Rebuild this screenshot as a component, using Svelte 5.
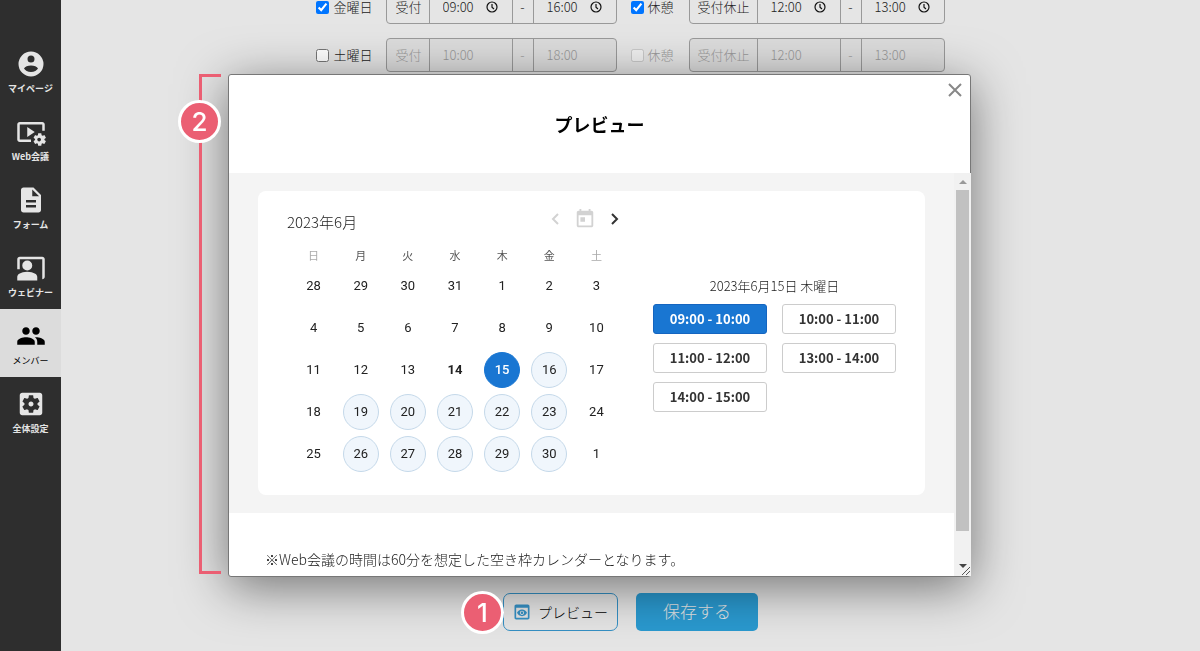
<script lang="ts">
  type Range = { label: string; from: string; to: string };
  type Row = { day: string; open: boolean; reception: Range; rest: Range };

  const menu = [
    {
      label: "マイページ",
      path: "M12 2a10 10 0 1 0 0 20 10 10 0 0 0 0-20zM12 5.2a2.8 2.8 0 1 1 0 5.600 2.8 2.8 0 0 1 0-5.600zM6.4 15.6c.8-1.5 3-2.5 5.6-2.5s4.8 1 5.6 2.5c-.8 1.6-3 2.7-5.6 2.7s-4.8-1.1-5.6-2.7z",
    },
    {
      label: "Web会議",
      path: "M3 6h18v5h2V6c0-1.1-.9-2-2-2H3c-1.1 0-2 .9-2 2v12c0 1.1.9 2 2 2h9v-2H3V6zM15 12L9 8v8zM22.71 18.43c.03-.29.04-.58.01-.86l1.07-.85c.1-.08.12-.21.06-.32l-1.03-1.79c-.06-.11-.19-.15-.31-.11l-1.28.5c-.23-.17-.48-.31-.75-.42l-.2-1.36c-.02-.12-.12-.21-.25-.21h-2.07c-.12 0-.23.09-.25.21l-.2 1.36c-.26.11-.51.26-.74.42l-1.28-.5c-.12-.05-.25 0-.31.11l-1.03 1.79c-.06.11-.04.24.06.32l1.07.86c-.03.29-.04.58-.01.86l-1.07.85c-.1.08-.12.21-.06.32l1.03 1.79c.06.11.19.15.31.11l1.27-.5c.23.17.48.31.75.42l.2 1.36c.02.12.12.21.25.21h2.07c.12 0 .23-.09.25-.21l.2-1.36c.26-.11.51-.26.74-.42l1.28.5c.12.05.25 0 .31-.11l1.03-1.79c.06-.11.04-.24-.06-.32l-1.06-.86zM18.5 19.5c-.83 0-1.5-.67-1.5-1.5s.67-1.5 1.5-1.5 1.5.67 1.5 1.5-.67 1.5-1.5 1.5z",
    },
    {
      label: "フォーム",
      path: "M14 2H6c-1.1 0-2 .9-2 2v16c0 1.1.9 2 2 2h12c1.1 0 2-.9 2-2V8l-6-6zm2 16H8v-2h8v2zm0-4H8v-2h8v2zm-3-5V3.5L18.5 9H13z",
    },
    {
      label: "ウェビナー",
      path: "M21 3H3c-1.1 0-2 .9-2 2v8h2V5h18v16c1.1 0 2-.9 2-2V5c0-1.1-.9-2-2-2zM9 6a4 4 0 1 0 0 8 4 4 0 0 0 0-8zM15.39 16.56C13.71 15.7 11.53 15 9 15s-4.71.7-6.39 1.56C1.61 17.07 1 18.1 1 19.22V22h16v-2.78c0-1.12-.61-2.15-1.61-2.66z",
    },
    {
      label: "メンバー",
      active: true,
      path: "M16 11c1.66 0 2.99-1.34 2.99-3S17.66 5 16 5s-3 1.34-3 3 1.34 3 3 3zm-8 0c1.66 0 2.99-1.34 2.99-3S9.66 5 8 5 5 6.34 5 8s1.34 3 3 3zm0 2c-2.33 0-7 1.17-7 3.5V19h14v-2.5c0-2.33-4.67-3.5-7-3.5zm8 0c-.29 0-.62.02-.97.05 1.16.84 1.97 1.97 1.97 3.45V19h6v-2.5c0-2.33-4.67-3.5-7-3.5z",
    },
    {
      label: "全体設定",
      path: "M12 10c-1.1 0-2 .9-2 2s.9 2 2 2 2-.9 2-2-.9-2-2-2zm7-7H5c-1.11 0-2 .9-2 2v14c0 1.1.89 2 2 2h14c1.11 0 2-.9 2-2V5c0-1.1-.89-2-2-2zm-1.75 9c0 .23-.02.46-.05.68l1.48 1.16c.13.11.17.3.08.45l-1.4 2.42c-.09.15-.27.21-.43.15l-1.74-.7c-.36.28-.76.51-1.18.69l-.26 1.85c-.03.17-.18.3-.35.3h-2.8c-.17 0-.32-.13-.35-.29l-.26-1.85c-.43-.18-.82-.41-1.18-.69l-1.74.7c-.16.06-.34 0-.43-.15l-1.4-2.42c-.09-.15-.05-.34.08-.45l1.48-1.16c-.03-.23-.05-.46-.05-.69 0-.23.02-.46.05-.68l-1.48-1.16c-.13-.11-.17-.3-.08-.45l1.4-2.42c.09-.15.27-.21.43-.15l1.74.7c.36-.28.76-.51 1.18-.69l.26-1.85c.03-.17.18-.3.35-.3h2.8c.17 0 .32.13.35.29l.26 1.85c.43.18.82.41 1.18.69l1.74-.7c.16-.06.34 0 .43.15l1.4 2.42c.09.15.05.34-.08.45l-1.48 1.16c.03.23.05.46.05.69z",
    },
  ];

  let rows: Row[] = $state([
    {
      day: "金曜日",
      open: true,
      reception: { label: "受付", from: "09:00", to: "16:00" },
      rest: { label: "受付休止", from: "12:00", to: "13:00" },
    },
    {
      day: "土曜日",
      open: false,
      reception: { label: "受付", from: "10:00", to: "18:00" },
      rest: { label: "受付休止", from: "12:00", to: "13:00" },
    },
  ]);

  const weekdays = ["日", "月", "火", "水", "木", "金", "土"];
  const weeks = [
    [28, 29, 30, 31, 1, 2, 3],
    [4, 5, 6, 7, 8, 9, 10],
    [11, 12, 13, 14, 15, 16, 17],
    [18, 19, 20, 21, 22, 23, 24],
    [25, 26, 27, 28, 29, 30, 1],
  ];
  const slots = [
    "09:00 - 10:00",
    "10:00 - 11:00",
    "11:00 - 12:00",
    "13:00 - 14:00",
    "14:00 - 15:00",
  ];
  const today = 14;

  let day = $state(15);
  let slot = $state("09:00 - 10:00");

  // weekdays after today can be booked
  function bookable(w: number, d: number) {
    return d > 0 && d < 6 && w > 1 && weeks[w][d] > today;
  }
</script>

{#snippet timeRange(range: Range, off: boolean)}
  <div class="range" class:off>
    <span class="name">{range.label}</span>
    <label class="time">
      <input type="text" bind:value={range.from} disabled={off} aria-label="{range.label} 開始" />
      {#if !off}{@render clock()}{/if}
    </label>
    <span class="dash">-</span>
    <label class="time">
      <input type="text" bind:value={range.to} disabled={off} aria-label="{range.label} 終了" />
      {#if !off}{@render clock()}{/if}
    </label>
  </div>
{/snippet}

{#snippet clock()}
  <svg class="clock" viewBox="0 0 12 12" aria-hidden="true">
    <circle cx="6" cy="6" r="5" />
    <path d="M6 3v3.200L8 8" />
  </svg>
{/snippet}

<div class="page">
  <nav class="sidebar">
    {#each menu as item}
      <a href="#{item.label}" class:active={item.active}>
        <svg viewBox="0 0 24 24" aria-hidden="true">
          <path fill-rule="evenodd" d={item.path} />
        </svg>
        <span>{item.label}</span>
      </a>
    {/each}
  </nav>

  <main>
    <div class="schedule">
      {#each rows as row}
        <div class="row">
          <label class="check day">
            <input type="checkbox" bind:checked={row.open} />{row.day}
          </label>
          {@render timeRange(row.reception, !row.open)}
          <label class="check rest" class:off={!row.open}>
            <input type="checkbox" checked={row.open} disabled={!row.open} />休憩
          </label>
          {@render timeRange(row.rest, !row.open)}
        </div>
      {/each}
    </div>

    <div class="actions">
      <button class="preview">
        <svg viewBox="0 0 24 24" aria-hidden="true">
          <path d="M19 3H5c-1.11 0-2 .9-2 2v14c0 1.1.89 2 2 2h14c1.1 0 2-.9 2-2V5c0-1.1-.89-2-2-2zm0 16H5V7h14v12zm-5.5-6c0 .83-.67 1.5-1.5 1.5s-1.5-.67-1.5-1.5.67-1.5 1.5-1.5 1.5.67 1.5 1.5zM12 9c-2.73 0-5.06 1.66-6 4 .94 2.34 3.27 4 6 4s5.06-1.66 6-4c-.94-2.34-3.27-4-6-4zm0 6.500c-1.38 0-2.5-1.12-2.5-2.5s1.12-2.5 2.5-2.5 2.5 1.12 2.5 2.5-1.12 2.5-2.5 2.5z" />
        </svg>
        プレビュー
        <span class="badge one">1</span>
      </button>
      <button class="save">保存する</button>
    </div>
  </main>
</div>

<div class="overlay">
  <div class="dialog" role="dialog" aria-labelledby="preview-title">
    <div class="bracket"></div>
    <span class="badge two">2</span>

    <header>
      <h2 id="preview-title">プレビュー</h2>
      <button class="close" aria-label="閉じる">
        <svg viewBox="0 0 14 14" aria-hidden="true"><path d="M1 1l12 12M13 1L1 13" /></svg>
      </button>
    </header>

    <div class="body">
      <div class="content">
        <div class="panel">
          <div class="card">
            <section class="calendar">
              <div class="month">
                <span>2023年6月</span>
                <div class="nav">
                  <button disabled aria-label="前の月">
                    <svg class="arrow" viewBox="0 0 12 12"><path d="M8 1L3 6l5 5" /></svg>
                  </button>
                  <button disabled aria-label="今日">
                    <svg class="today-icon" viewBox="0 0 24 24">
                      <path d="M19 3h-1V1h-2v2H8V1H6v2H5c-1.1 0-2 .9-2 2v14c0 1.1.9 2 2 2h14c1.1 0 2-.9 2-2V5c0-1.1-.9-2-2-2zm0 16H5V8h14v11zM7 10h5v5H7z" />
                    </svg>
                  </button>
                  <button aria-label="次の月">
                    <svg class="arrow" viewBox="0 0 12 12"><path d="M4 1l5 5-5 5" /></svg>
                  </button>
                </div>
              </div>
              <table>
                <thead>
                  <tr>
                    {#each weekdays as name, d}
                      <th class:weekend={d === 0 || d === 6}>{name}</th>
                    {/each}
                  </tr>
                </thead>
                <tbody>
                  {#each weeks as week, w}
                    <tr>
                      {#each week as date, d}
                        <td>
                          {#if bookable(w, d)}
                            <button
                              class="date free"
                              class:selected={date === day}
                              onclick={() => (day = date)}>{date}</button
                            >
                          {:else}
                            <span class="date" class:today={date === today}>{date}</span>
                          {/if}
                        </td>
                      {/each}
                    </tr>
                  {/each}
                </tbody>
              </table>
            </section>

            <section class="slots">
              <p>2023年6月{day}日 {weekdays[(day + 3) % 7]}曜日</p>
              <div class="grid">
                {#each slots as s}
                  <button class:selected={s === slot} onclick={() => (slot = s)}>{s}</button>
                {/each}
              </div>
            </section>
          </div>
        </div>
        <p class="note">※Web会議の時間は60分を想定した空き枠カレンダーとなります。</p>
      </div>

      <div class="scrollbar" aria-hidden="true">
        <svg class="up" viewBox="0 0 8 4"><path d="M0 4l4-4 4 4z" /></svg>
        <div class="thumb"></div>
        <svg class="down" viewBox="0 0 8 4"><path d="M0 0h8L4 4z" /></svg>
        <svg class="grip" viewBox="0 0 10 10"><path d="M1 9l8-8M5 9l4-4" /></svg>
      </div>
    </div>
  </div>
</div>

<style>
  :global(body) {
    font-family: "Noto Sans CJK JP", sans-serif;
    color: #222;
    background: #e5e5e5;
  }
  button,
  input {
    font: inherit;
    color: inherit;
    box-sizing: border-box;
    margin: 0;
  }
  button {
    border: 0;
    padding: 0;
    background: none;
    cursor: pointer;
  }
  h2,
  p {
    margin: 0;
  }
  svg {
    display: block;
  }

  .page {
    display: flex;
    height: 100vh;
    overflow: hidden;
  }
  .sidebar {
    flex: 0 0 61px;
    box-sizing: border-box;
    padding-top: 37px;
    background: #2e2e2e;
  }
  .sidebar a {
    display: flex;
    flex-direction: column;
    align-items: center;
    gap: 3px;
    height: 68px;
    box-sizing: border-box;
    padding-top: 12px;
    font-size: 9px;
    line-height: 14px;
    font-weight: 700;
    color: #e5e5e5;
    text-decoration: none;
  }
  .sidebar svg {
    width: 30px;
    height: 30px;
    fill: currentColor;
  }
  .sidebar .active {
    background: #dcdcdc;
    color: #000;
    font-weight: 400;
  }

  main {
    flex: 1;
    display: flex;
    flex-direction: column;
    align-items: center;
    justify-content: space-between;
    padding-bottom: 20px;
    font-weight: 300;
  }
  /* the list is scrolled a little past its top */
  .schedule {
    display: flex;
    flex-direction: column;
    gap: 14px;
    margin-top: -10px;
  }
  .row {
    display: flex;
    align-items: center;
    font-size: 13px;
    line-height: 14px;
  }
  .check {
    display: flex;
    align-items: center;
    gap: 4px;
  }
  .check input {
    width: 13px;
    height: 13px;
  }
  .day {
    width: 70px;
  }
  .rest {
    width: 58px;
    margin-left: 14px;
  }
  .check.off {
    color: #999;
  }
  .range {
    display: flex;
    height: 34px;
    box-sizing: border-box;
    border: 1px solid #999;
    border-radius: 4px;
  }
  .range > * {
    display: flex;
    align-items: center;
  }
  .range > * + * {
    border-left: 1px solid #999;
  }
  .range.off {
    color: #999;
    background: #dcdcdc;
  }
  .name {
    padding: 0 7px 0 8px;
  }
  .dash {
    width: 20px;
    justify-content: center;
  }
  .time {
    width: 83px;
    box-sizing: border-box;
    padding-left: 13px;
  }
  .time input {
    width: 43px;
    height: 14px;
    padding: 0;
    border: 0;
    outline: none;
    background: none;
  }
  .clock {
    width: 12px;
    height: 12px;
    fill: none;
    stroke: #111;
    stroke-width: 1.2;
  }

  .actions {
    display: flex;
    gap: 18px;
  }
  .actions button {
    height: 38px;
    border-radius: 5px;
  }
  .preview {
    position: relative;
    display: flex;
    align-items: center;
    gap: 6px;
    width: 115px;
    padding-left: 8px;
    border: 1px solid #3590c4;
    font-size: 14px;
    color: #000;
  }
  .actions .preview {
    border-radius: 7px;
  }
  .preview svg {
    width: 20px;
    height: 20px;
    fill: #3590c4;
  }
  .save {
    width: 122px;
    padding-bottom: 3px;
    background: #2a99cf;
    color: #e5e5e5;
    font-size: 17px;
  }

  .badge {
    position: absolute;
    z-index: 2;
    display: grid;
    place-items: center;
    width: 37px;
    height: 37px;
    border: 3px solid #fff;
    border-radius: 50%;
    background: #eb5f73;
    color: #fff;
    font: 500 26px/37px Inter, sans-serif;
  }
  .one {
    left: -43px;
    top: -3px;
  }
  .two {
    left: -51px;
    top: 25px;
  }
  .bracket {
    position: absolute;
    top: -1px;
    bottom: 2px;
    left: -30px;
    width: 22px;
    box-sizing: border-box;
    border: 3px solid #eb5f73;
    border-right: 0;
  }

  .overlay {
    position: fixed;
    inset: 0;
    display: grid;
    place-items: center;
    padding-right: 1px;
  }
  .dialog {
    position: relative;
    width: 60%;
    min-width: 743px;
    box-sizing: border-box;
    border: 1px solid #777;
    border-radius: 3px;
    background: #fff;
    box-shadow: 0 10px 50px rgba(0, 0, 0, 0.5);
  }
  header {
    display: grid;
    place-items: center;
    height: 98px;
  }
  h2 {
    font-size: 18px;
    line-height: 28px;
    color: #000;
  }
  .close {
    position: absolute;
    top: 8px;
    right: 8px;
  }
  .close svg {
    width: 14px;
    height: 14px;
    fill: none;
    stroke: #888;
    stroke-width: 2;
  }
  .body {
    display: flex;
    margin-right: -1px;
  }
  .content {
    flex: 1;
  }
  .panel {
    padding: 18px 29px;
    background: #f4f4f4;
  }
  .card {
    display: flex;
    align-items: center;
    justify-content: space-between;
    padding: 16px 29px 20px;
    border-radius: 8px;
    background: #fff;
  }
  .calendar {
    width: 339px;
  }
  .month {
    display: flex;
    justify-content: space-between;
    height: 30px;
    margin-bottom: 9px;
    font-size: 15px;
    line-height: 30px;
    font-weight: 300;
  }
  .nav {
    display: flex;
    gap: 5px;
  }
  .nav button {
    display: grid;
    place-items: center;
    width: 24px;
    height: 24px;
    color: #333;
  }
  .nav button:disabled {
    color: #d2d2d2;
  }
  .arrow {
    width: 12px;
    height: 12px;
    fill: none;
    stroke: currentColor;
    stroke-width: 2;
  }
  .today-icon {
    width: 22px;
    height: 22px;
    fill: currentColor;
  }
  table {
    margin-left: 3px;
    border-collapse: collapse;
    table-layout: fixed;
    width: 330px;
  }
  th {
    height: 19px;
    padding: 0;
    font-size: 11px;
    line-height: 19px;
    font-weight: 400;
    color: #555;
  }
  .weekend {
    color: #aaa;
  }
  td {
    height: 42px;
    padding: 0;
  }
  .date {
    display: grid;
    place-items: center;
    width: 36px;
    height: 36px;
    margin: 0 auto;
    box-sizing: border-box;
    border-radius: 50%;
    font: 400 13px/16px Roboto, sans-serif;
  }
  .free {
    border: 1px solid #c5d9ea;
    background: #f0f6fc;
  }
  .date.selected {
    border-color: #1976d2;
    background: #1976d2;
    color: #fff;
    font-weight: 500;
  }
  .date.today {
    font-weight: 700;
  }

  .slots {
    padding-top: 6px;
  }
  .slots p {
    margin-bottom: 9px;
    font-size: 13px;
    line-height: 18px;
    font-weight: 300;
    text-align: center;
  }
  .grid {
    display: grid;
    grid-template-columns: 114px 114px;
    gap: 9px 15px;
  }
  .grid button {
    height: 30px;
    border: 1px solid #ccc;
    border-radius: 3px;
    font-size: 13px;
    line-height: 20px;
    font-weight: 700;
    color: #333;
  }
  .grid .selected {
    border-color: #1565c0;
    background: #1976d2;
    color: #fff;
  }
  .note {
    padding: 35px 36px 5px;
    font-size: 14px;
    line-height: 23px;
    font-weight: 300;
  }

  .scrollbar {
    position: relative;
    display: flex;
    flex-direction: column;
    align-items: center;
    gap: 6px;
    width: 17px;
    box-sizing: border-box;
    padding: 7px 0 8px;
    background: #f1f1f1;
  }
  .up,
  .down {
    width: 8px;
    height: 4px;
    fill: #999;
  }
  .down {
    margin-top: auto;
    fill: #444;
  }
  .thumb {
    width: 13px;
    height: 88%;
    background: #c1c1c1;
  }
  .grip {
    position: absolute;
    right: 0;
    bottom: 0;
    width: 10px;
    height: 10px;
    stroke: #555;
    fill: none;
  }
</style>
